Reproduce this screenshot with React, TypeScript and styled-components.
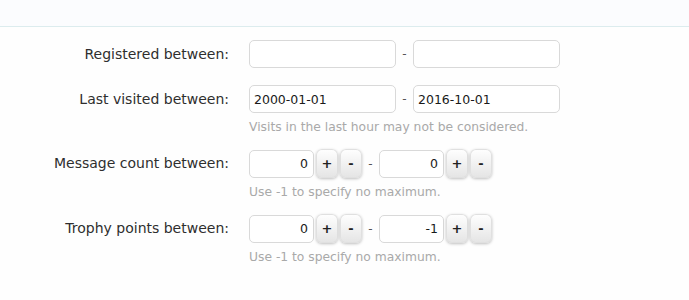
import React from "react";
import styled, { createGlobalStyle } from "styled-components";

const Global = createGlobalStyle`
  html, body { margin: 0; padding: 0; background: #fefefe; }
  body { font-family: "DejaVu Sans", "Noto Sans", sans-serif; font-size: 13px; color: #333; }
  * { box-sizing: border-box; }
`;

const Header = styled.div`
  height: 27px;
  background: #fbfcfe;
  border-bottom: 1px solid #dcecee;
`;

const Form = styled.div`
  padding-top: 13px;
  display: flex;
  flex-direction: column;
`;

const Row = styled.div<{ $gap: number }>`
  display: grid;
  grid-template-columns: 229px 1fr;
  column-gap: 20px;
  margin-bottom: ${(p) => p.$gap}px;
`;

const Label = styled.div`
  text-align: right;
  line-height: 28px;
  color: #2e2e2e;
  font-size: 14px;
  white-space: nowrap;
`;

const Controls = styled.div`
  display: flex;
  flex-direction: column;
`;

const Line = styled.div`
  display: flex;
  align-items: center;
`;

const TextInput = styled.input<{ $w: number; $right?: boolean }>`
  width: ${(p) => p.$w}px;
  height: 28px;
  border: 1px solid #d9d9d9;
  border-radius: 5px;
  background: #fff;
  font-family: inherit;
  font-size: 12.5px;
  color: #1a1a1a;
  padding: 0 ${(p) => (p.$right ? 5 : 4)}px 0 4px;
  text-align: ${(p) => (p.$right ? "right" : "left")};
  outline: none;
  margin: 0;
`;

const Dash = styled.span`
  width: 17px;
  text-align: center;
  color: #555;
  font-size: 12px;
`;

const Spin = styled.button`
  width: 22px;
  height: 29px;
  margin-left: 2px;
  border: none;
  border-radius: 6px;
  background: linear-gradient(#ffffff, #e4e4e4);
  box-shadow: 0 1px 3px rgba(0, 0, 0, 0.25), inset 0 0 0 1px #e0e0e0;
  font-family: "DejaVu Sans", sans-serif;
  font-weight: bold;
  font-size: 13px;
  color: #222;
  padding: 0;
  line-height: 29px;
  cursor: pointer;
`;

const Hint = styled.div`
  margin-top: 6px;
  line-height: 16px;
  font-size: 12.3px;
  color: #a9a9a9;
`;

const NumberBox: React.FC<{ value: string }> = ({ value }) => (
  <>
    <TextInput $w={65} $right defaultValue={value} />
    <Spin>+</Spin>
    <Spin>-</Spin>
  </>
);

export default function App() {
  return (
    <>
      <Global />
      <Header />
      <Form>
        <Row $gap={17}>
          <Label>Registered between:</Label>
          <Controls>
            <Line>
              <TextInput $w={147} />
              <Dash>-</Dash>
              <TextInput $w={147} />
            </Line>
          </Controls>
        </Row>
        <Row $gap={14}>
          <Label>Last visited between:</Label>
          <Controls>
            <Line>
              <TextInput $w={147} defaultValue="2000-01-01" />
              <Dash>-</Dash>
              <TextInput $w={147} defaultValue="2016-10-01" />
            </Line>
            <Hint>Visits in the last hour may not be considered.</Hint>
          </Controls>
        </Row>
        <Row $gap={14}>
          <Label>Message count between:</Label>
          <Controls>
            <Line>
              <NumberBox value="0" />
              <Dash>-</Dash>
              <NumberBox value="0" />
            </Line>
            <Hint>Use -1 to specify no maximum.</Hint>
          </Controls>
        </Row>
        <Row $gap={14}>
          <Label>Trophy points between:</Label>
          <Controls>
            <Line>
              <NumberBox value="0" />
              <Dash>-</Dash>
              <NumberBox value="-1" />
            </Line>
            <Hint>Use -1 to specify no maximum.</Hint>
          </Controls>
        </Row>
      </Form>
    </>
  );
}
